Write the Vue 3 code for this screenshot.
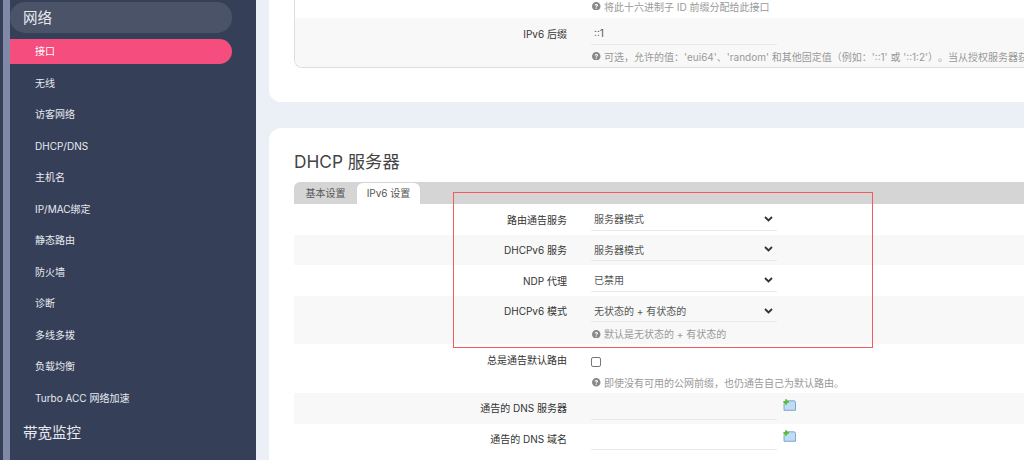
<script setup>
const navItems = ['无线', '访客网络', 'DHCP/DNS', '主机名', 'IP/MAC绑定', '静态路由', '防火墙', '诊断', '多线多拨', '负载均衡', 'Turbo ACC 网络加速']
const selectRows = [
  { label: '路由通告服务', value: '服务器模式' },
  { label: 'DHCPv6 服务', value: '服务器模式' },
  { label: 'NDP 代理', value: '已禁用' },
  { label: 'DHCPv6 模式', value: '无状态的 + 有状态的', hint: '默认是无状态的 + 有状态的' },
]
const dnsRows = ['通告的 DNS 服务器', '通告的 DNS 域名']
const helpPath = 'M5 0a5 5 0 1 0 0 10A5 5 0 0 0 5 0zm.6 8H4.3V6.8h1.3zm1.3-3.4c-.3.3-.7.5-1 .8-.2.2-.3.4-.3.8H4.4c0-.6.1-1 .5-1.3.3-.3.8-.5.9-.8.1-.4-.2-.7-.7-.7s-.8.3-.9.8L3 4.2C3.100 3 4 2.300 5.100 2.300c1.500 0 2.400 1.300 1.800 2.300z'
</script>

<template>
  <div class="page">
    <aside class="sidebar">
      <nav class="nav">
        <div class="group group-open">网络</div>
        <div class="item item-active">接口</div>
        <div v-for="item in navItems" :key="item" class="item">{{ item }}</div>
        <div class="group">带宽监控</div>
      </nav>
    </aside>

    <main class="main">
      <section class="card card-top">
        <div class="table table-top">
          <div class="row row-clipped">
            <div></div>
            <div class="hint hint-clipped">
              <svg class="help" viewBox="0 0 10 10"><path :d="helpPath" /></svg>
              将此十六进制子 ID 前缀分配给此接口
            </div>
          </div>
          <div class="row row-shade">
            <div class="label">IPv6 后缀</div>
            <div>
              <div class="field"><span class="value">::1</span></div>
              <div class="hint">
                <svg class="help" viewBox="0 0 10 10"><path :d="helpPath" /></svg>
                可选，允许的值：'eui64'、'random' 和其他固定值（例如：'::1' 或 '::1:2'）。当从授权服务器获
              </div>
            </div>
          </div>
        </div>
      </section>

      <section class="card card-dhcp">
        <h2 class="title">DHCP 服务器</h2>
        <div class="tabs">
          <div class="tab">基本设置</div>
          <div class="tab tab-active">IPv6 设置</div>
        </div>
        <div class="table">
          <div v-for="(row, i) in selectRows" :key="row.label" class="row" :class="{ 'row-shade': i % 2 === 1 }">
            <div class="label">{{ row.label }}</div>
            <div>
              <div class="field">
                <span class="value">{{ row.value }}</span>
                <svg class="chevron" viewBox="0 0 9 6"><path d="M1 1l3.500 3.500L8 1" /></svg>
              </div>
              <div v-if="row.hint" class="hint">
                <svg class="help" viewBox="0 0 10 10"><path :d="helpPath" /></svg>
                {{ row.hint }}
              </div>
            </div>
          </div>
          <div class="row">
            <div class="label">总是通告默认路由</div>
            <div>
              <div class="check-line"><span class="checkbox"></span></div>
              <div class="hint">
                <svg class="help" viewBox="0 0 10 10"><path :d="helpPath" /></svg>
                即使没有可用的公网前缀，也仍通告自己为默认路由。
              </div>
            </div>
          </div>
          <div v-for="(label, i) in dnsRows" :key="label" class="row" :class="{ 'row-shade': i === 0 }">
            <div class="label">{{ label }}</div>
            <div class="dns-cell">
              <div class="field"></div>
              <svg class="add" viewBox="0 0 13 12">
                <path d="M4 1.800H10.800Q12.500 1.800 12.500 3.500V11.300H1V4.800z" fill="#bddcf6" stroke="#6f93b8" stroke-width=".8" />
                <path d="M2.200 0.300H4V2.100H5.800V3.900H4V5.700H2.200V3.900H.4V2.100H2.200z" fill="#58bf2c" />
              </svg>
            </div>
          </div>
        </div>
      </section>
    </main>

    <div class="highlight"></div>
  </div>
</template>

<style>
html, body { margin: 0; overflow: hidden; }
</style>

<style scoped>
.page {
  position: relative;
  display: flex;
  width: 1024px;
  height: 460px;
  overflow: hidden;
  background: #eaf0f6;
  font-family: "Inter", "Noto Sans CJK SC", sans-serif;
  font-size: 10px;
  color: #444;
  text-spacing-trim: space-all;
}
.sidebar {
  flex: 0 0 256px;
  box-sizing: border-box;
  padding-left: 3px;
  background: #363f58;
}
.nav {
  box-sizing: border-box;
  width: 229px;
  height: 460px;
  padding-top: 2px;
  border-left: 7px solid #8089a6;
  color: #e8eaf0;
}
.group {
  box-sizing: border-box;
  height: 31px;
  padding-left: 13px;
  margin-bottom: 6px;
  border-radius: 0 15px 15px 0;
  font-size: 14.500px;
  line-height: 31px;
}
.group-open { background: #4a5367; border-radius: 15px; }
.item {
  box-sizing: border-box;
  height: 25.400px;
  margin-bottom: 6.150px;
  padding-left: 25px;
  border-radius: 0 13px 13px 0;
  font-size: 10px;
  line-height: 25.400px;
  white-space: nowrap;
}
.item-active { background: #f54d7e; color: #fff; }
.main {
  flex: 1;
  min-width: 0;
  padding-left: 13px;
  overflow: hidden;
}
.card {
  background: #fff;
  border-radius: 12px 0 0 12px;
}
.card-top {
  display: flex;
  flex-direction: column;
  justify-content: flex-end;
  box-sizing: border-box;
  height: 102px;
  padding: 0 0 34.500px 25px;
  border-top-left-radius: 0;
  margin-bottom: 26px;
}
.card-dhcp { padding: 22px 0 0 25px; height: 400px; }
.title {
  margin: 0 0 9px;
  height: 23px;
  font-size: 17.300px;
  line-height: 23px;
  font-weight: 400;
  color: #444;
}
.tabs {
  display: flex;
  align-items: flex-end;
  height: 22px;
  background: #d5d5d5;
  border-radius: 6px 0 0 0;
}
.tab {
  width: 63px;
  height: 21px;
  line-height: 21px;
  text-align: center;
  color: #555;
  border-radius: 6px 6px 0 0;
}
.tab-active { background: #fff; }
.table { width: 900px; }
.table-top {
  border: 1px solid #ddd;
  border-top: 0;
  border-right: 0;
  border-radius: 0 0 0 8px;
  overflow: hidden;
}
.row {
  display: grid;
  grid-template-columns: 273px 186px;
  column-gap: 24px;
  padding-bottom: 4px;
}
.row-shade { background: #f8f8f8; }
.row-clipped {
  padding: 0;
  height: 18px;
  grid-template-columns: 272px 186px;
}
.table-top .row-shade { grid-template-columns: 272px 186px; }
.label {
  box-sizing: border-box;
  height: 26.600px;
  padding-top: 2.500px;
  line-height: 26.600px;
  text-align: right;
  color: #333;
}
.field {
  box-sizing: border-box;
  display: flex;
  align-items: center;
  justify-content: space-between;
  width: 186px;
  height: 26.600px;
  padding: 4px 4px 0 3px;
  border-bottom: 1px solid #eaeaea;
}
.value { color: #555; }
.chevron {
  width: 9px;
  height: 6px;
  fill: none;
  stroke: #333;
  stroke-width: 1.800;
}
.hint {
  display: flex;
  align-items: center;
  gap: 3.500px;
  height: 13px;
  padding: 5px 0 0 1px;
  color: #999;
  white-space: nowrap;
}
.hint-clipped {
  height: 12px;
  padding-top: 0;
}
.help {
  flex: none;
  width: 8.500px;
  height: 8.500px;
  fill: #888;
}
.check-line {
  box-sizing: border-box;
  display: flex;
  align-items: center;
  height: 26.600px;
  padding-top: 8px;
}
.checkbox {
  box-sizing: border-box;
  width: 10px;
  height: 10px;
  border: 1px solid #777;
  border-radius: 2px;
  background: #fff;
}
.dns-cell { position: relative; }
.add {
  position: absolute;
  left: 192px;
  top: 6px;
  width: 13px;
  height: 12px;
}
.highlight {
  position: absolute;
  left: 453px;
  top: 192px;
  width: 418px;
  height: 154px;
  border: 1px solid #f55a5f;
  pointer-events: none;
}
</style>
